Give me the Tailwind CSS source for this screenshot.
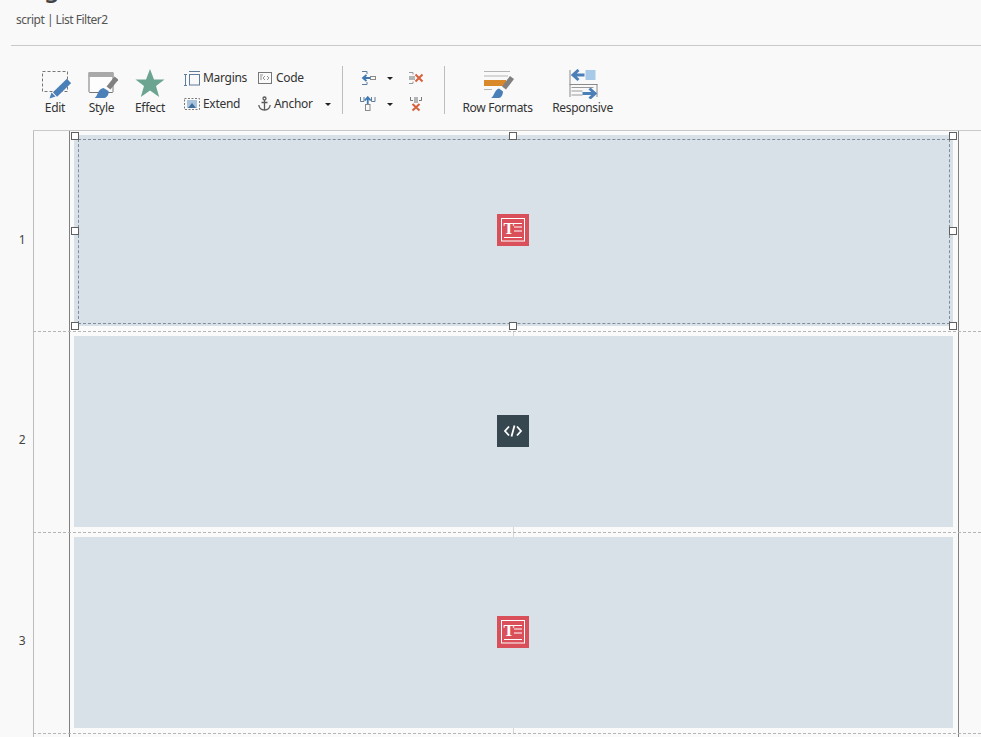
<!DOCTYPE html>
<html lang="en">
<head>
    <meta charset="UTF-8">
    <title>List Filter2</title>
    <script src="https://cdn.jsdelivr.net/npm/@tailwindcss/browser@4"></script>
</head>
<body class="bg-[#f9f9f9] text-[#333] font-['Noto_Sans',sans-serif] text-[12px] tracking-[-0.3px] w-[981px] h-[737px] overflow-hidden">

    <!-- Header -->
    <div class="h-[46px] ml-[11px] border-b border-[#c9c9c9] overflow-hidden relative">
        <div class="absolute left-[5px] top-[-28px] text-[24px] leading-[32px] font-semibold text-[#444]">Page</div>
        <div class="pl-[5px] pt-[11px] leading-[18px] tracking-[-0.5px] text-[#555]">script | List Filter2</div>
    </div>

    <!-- Toolbar -->
    <div class="h-[84px] flex pl-[35px] pt-[19px]">
        <div class="w-[40px] mt-[4px] flex flex-col items-center">
            <svg class="w-[32px] h-[30px]" viewBox="39 69 32 30" fill="none">
                <rect x="42.500" y="71.500" width="25" height="20" stroke="#777" stroke-dasharray="3 2"/>
                <path d="M69 81 55 94.500" stroke="#4a7fb8" stroke-width="6"/>
                <path d="M51.500 92.500l4 4-6 2z" fill="#4a7fb8"/>
            </svg>
            <span class="mt-px leading-[16px]">Edit</span>
        </div>
        <div class="w-[41px] ml-[6px] mt-[4px] flex flex-col items-center">
            <svg class="w-[32px] h-[30px]" viewBox="85.500 69 32 30" fill="none">
                <rect x="88.500" y="72.500" width="24" height="20" rx="1" stroke="#777" fill="#fdfdfd"/>
                <rect x="88" y="72" width="25" height="5" fill="#a9a9a9"/>
                <path d="M116 78 108 88" stroke="#808080" stroke-width="5"/>
                <path d="M94 98c3-1 3-9 9-10l5 3c1 3-2 7-4 7z" fill="#4a7fb8"/>
            </svg>
            <span class="mt-px leading-[16px]">Style</span>
        </div>
        <div class="w-[44px] ml-[6px] mt-[4px] flex flex-col items-center">
            <svg class="w-[32px] h-[30px]" viewBox="134 69 32 30">
                <path d="M150 69l4 10.500h10.500l-8.500 6.500 3.200 11-9.200-6.500-9.200 6.500 3.200-11-8.500-6.500h10.500z" fill="#6ba592"/>
            </svg>
            <span class="mt-px leading-[16px]">Effect</span>
        </div>

        <div class="w-[74px] ml-[12px]">
            <div class="h-[26px] flex items-center">
                <svg class="w-[16px] h-[16px]" viewBox="184 70 16 16" fill="none" stroke="#5f7d9b">
                    <path d="M184 74.500h3M185.500 74.500v11M184 85.500h3M189 71.500h11"/>
                    <rect x="189.500" y="74.500" width="10" height="10.500"/>
                </svg>
                <span class="ml-[3px]">Margins</span>
            </div>
            <div class="h-[26px] flex items-center">
                <svg class="w-[16px] h-[16px]" viewBox="184 96 16 16" fill="none">
                    <rect x="184.500" y="98.500" width="15" height="11" stroke="#777" stroke-dasharray="2 1.500"/>
                    <rect x="187" y="100" width="10" height="8" fill="#a9c3dc"/>
                    <path d="M188 108l4-5 4 5z" fill="#3f6d9c"/>
                </svg>
                <span class="ml-[3px]">Extend</span>
            </div>
        </div>
        <div class="w-[84px]">
            <div class="h-[26px] flex items-center">
                <svg class="w-[14px] h-[16px]" viewBox="258 70 14 16" fill="none" stroke="#777">
                    <rect x="258.500" y="72.500" width="13" height="11"/>
                    <path d="M260 75h3M260 77h2M260 79h2M265 76l-2 2 2 2M267 76l2 2-2 2" stroke-width="0.800"/>
                </svg>
                <span class="ml-[4px]">Code</span>
            </div>
            <div class="h-[26px] flex items-center">
                <svg class="w-[13px] h-[16px]" viewBox="258 96 13 16" fill="none" stroke="#5a5a5a" stroke-width="1.300">
                    <circle cx="264.500" cy="98.500" r="1.500"/>
                    <path d="M264.500 100v10M261.500 102.500h6M258.800 105c.3 3 2.500 4.800 5.700 5.200 3.200-.4 5.400-2.200 5.700-5.200"/>
                </svg>
                <span class="ml-[3px] w-[51px]">Anchor</span>
                <span class="w-0 h-0 border-x-[3px] border-x-transparent border-t-[3px] border-t-[#222]"></span>
            </div>
        </div>

        <div class="w-px h-[48px] mt-[1px] bg-[#bdbdbd]"></div>

        <div class="ml-[17px] w-[16px]">
            <div class="h-[26px] flex items-center">
                <svg class="w-[16px] h-[16px]" viewBox="360 70 16 16" fill="none">
                    <path d="M362 71.500h5M367 71.500v2.500M362 84.500h5M367 84.500v-2.500" stroke="#5f7d9b"/>
                    <path d="M370 78h-6M366.500 75 363 78l3.500 3" stroke="#3f78b0" stroke-width="1.800"/>
                    <rect x="370.500" y="76.500" width="5" height="3" stroke="#8a8a8a"/>
                </svg>
            </div>
            <div class="h-[26px] flex items-center">
                <svg class="w-[16px] h-[16px]" viewBox="361 96 16 16" fill="none">
                    <path d="M361.500 97v4.500h3.500V97M372.500 97v4.500h3.500V97" stroke="#5f7d9b"/>
                    <path d="M368.750 104v-6.500M365.800 100.500l2.950-3.300 2.950 3.300" stroke="#3f78b0" stroke-width="1.800"/>
                    <rect x="366.500" y="104.500" width="4.500" height="6" stroke="#8a8a8a"/>
                </svg>
            </div>
        </div>
        <div class="ml-[11px] w-[6px]">
            <div class="h-[26px] flex items-center">
                <span class="w-0 h-0 border-x-[3px] border-x-transparent border-t-[3px] border-t-[#222]"></span>
            </div>
            <div class="h-[26px] flex items-center">
                <span class="w-0 h-0 border-x-[3px] border-x-transparent border-t-[3px] border-t-[#222]"></span>
            </div>
        </div>
        <div class="ml-[15px] w-[16px]">
            <div class="h-[26px] flex items-center">
                <svg class="w-[16px] h-[16px]" viewBox="408 70 16 16" fill="none">
                    <path d="M409 72.500h4v2M409 83.500h4v-2" stroke="#999"/>
                    <rect x="409" y="76" width="6" height="4" fill="#b5b5b5"/>
                    <path d="M415.500 74.500l7 7M422.500 74.500l-7 7" stroke="#d9603b" stroke-width="2"/>
                </svg>
            </div>
            <div class="h-[26px] flex items-center">
                <svg class="w-[16px] h-[16px]" viewBox="408 96 16 16" fill="none">
                    <path d="M410.500 97v3.500h2.500M421.500 97v3.500h-2.500" stroke="#777"/>
                    <rect x="414" y="97" width="4" height="6" fill="#b5b5b5"/>
                    <path d="M412.500 104l7 6.500M419.500 104l-7 6.500" stroke="#d9603b" stroke-width="2"/>
                </svg>
            </div>
        </div>

        <div class="ml-[20px] w-px h-[48px] mt-[1px] bg-[#bdbdbd]"></div>

        <div class="w-[73px] ml-[16px] mt-[4px] flex flex-col items-center">
            <svg class="w-[32px] h-[30px]" viewBox="482 69 32 30" fill="none">
                <path d="M484 71.500h26M484 76h24M484 89.500h8" stroke="#b5b5b5"/>
                <rect x="484" y="80" width="22" height="6" fill="#d9882a"/>
                <path d="M512 77.500l-8 10.500" stroke="#808080" stroke-width="5"/>
                <path d="M491 98c3-1 3-8 8-9.500l4 3c0 3-2 6.500-4 6.500z" fill="#4a7fb8"/>
            </svg>
            <span class="mt-px leading-[16px] whitespace-nowrap">Row Formats</span>
        </div>
        <div class="w-[63px] ml-[17px] mt-[4px] flex flex-col items-center">
            <svg class="w-[32px] h-[30px]" viewBox="566.500 69 32 30" fill="none">
                <path d="M569.500 70v27M596.500 84v13M569 84.500h28" stroke="#8a8a8a"/>
                <rect x="585" y="70" width="10" height="10" fill="#a9c9e8"/>
                <path d="M584 75h-11M578 70 572.500 75l5.500 5" stroke="#4a7fb8" stroke-width="3"/>
                <path d="M571 87.500h22M571 91h11M571 95h11" stroke="#9a9a9a"/>
                <path d="M582 93.500h12M589 88.500l5.500 5-5.500 5" stroke="#4a7fb8" stroke-width="3"/>
            </svg>
            <span class="mt-px leading-[16px]">Responsive</span>
        </div>
    </div>

    <!-- Rows -->
    <div class="flex">
        <div class="w-[33px] shrink-0 text-[#444] pt-px">
            <div class="h-[201px] flex items-center justify-center pt-[16px] pl-[11px]">1</div>
            <div class="h-[201px] flex items-center justify-center pt-[15px] pl-[11px]">2</div>
            <div class="h-[201px] flex items-center justify-center pt-[15px] pl-[11px]">3</div>
        </div>
        <div class="flex-1 border-t border-[#c9c9c9]">

            <!-- Row 1 -->
            <div class="h-[201px] flex border-b border-dashed border-[#b5b5b5]">
                <div class="w-[36px] border-l border-[#bdbdbd]"></div>
                <div class="w-[890px] bg-[#fbfafa] border-x border-[#808080] pt-[4px] pl-[4px] pr-[5px] relative">
                    <div class="h-[191px] pr-px pb-px bg-[#d9e1e8] flex items-center justify-center">
                        <svg class="w-[32px] h-[32px]" viewBox="0 0 32 32" fill="none">
                            <rect width="32" height="32" fill="#d9505a"/>
                            <rect x="4.500" y="4.500" width="23" height="22.500" stroke="#fff"/>
                            <text x="6.500" y="20" font-family="Liberation Serif" font-weight="700" font-size="16" fill="#fff">T</text>
                            <path d="M17 9.500h8M17 13h8M17 17h8M7 23.500h18" stroke="#fff"/>
                        </svg>
                    </div>
                    <!-- selection -->
                    <div class="absolute left-[8px] top-[8px] w-[872px] h-[185px] border border-dashed border-[#7f8c99]"></div>
                    <div class="absolute left-[1px] top-px w-[8px] h-[8px] bg-white border border-[#606060]"></div>
                    <div class="absolute left-[439px] top-px w-[8px] h-[8px] bg-white border border-[#606060]"></div>
                    <div class="absolute left-[879px] top-px w-[8px] h-[8px] bg-white border border-[#606060]"></div>
                    <div class="absolute left-[1px] top-[96px] w-[8px] h-[8px] bg-white border border-[#606060]"></div>
                    <div class="absolute left-[879px] top-[96px] w-[8px] h-[8px] bg-white border border-[#606060]"></div>
                    <div class="absolute left-[1px] top-[191px] w-[8px] h-[8px] bg-white border border-[#606060]"></div>
                    <div class="absolute left-[439px] top-[191px] w-[8px] h-[8px] bg-white border border-[#606060]"></div>
                    <div class="absolute left-[879px] top-[191px] w-[8px] h-[8px] bg-white border border-[#606060]"></div>
                </div>
                <div class="flex-1"></div>
            </div>

            <!-- Row 2 -->
            <div class="h-[201px] flex border-b border-dashed border-[#b5b5b5]">
                <div class="w-[36px] border-l border-[#bdbdbd]"></div>
                <div class="w-[890px] bg-[#fbfafa] border-x border-[#808080] pt-[4px] pl-[4px] pr-[5px] relative">
                    <div class="absolute left-[443px] top-0 w-px h-[4px] bg-[#d5d5d5]"></div>
                    <div class="absolute left-[443px] bottom-0 w-px h-[5px] bg-[#d5d5d5]"></div>
                    <div class="h-[191px] pr-px pb-px bg-[#d9e1e8] flex items-center justify-center">
                        <svg class="w-[32px] h-[32px]" viewBox="0 0 32 32" fill="none">
                            <rect width="32" height="32" fill="#37474f"/>
                            <path d="M12 11.500 8 16l4 4.500M20 11.500 24 16l-4 4.500M17.500 10.500l-3 11" stroke="#fff" stroke-width="1.800"/>
                        </svg>
                    </div>
                </div>
                <div class="flex-1"></div>
            </div>

            <!-- Row 3 -->
            <div class="h-[201px] flex border-b border-dashed border-[#b5b5b5]">
                <div class="w-[36px] border-l border-[#bdbdbd]"></div>
                <div class="w-[890px] bg-[#fbfafa] border-x border-[#808080] pt-[4px] pl-[4px] pr-[5px] relative">
                    <div class="absolute left-[443px] top-0 w-px h-[4px] bg-[#d5d5d5]"></div>
                    <div class="absolute left-[443px] bottom-0 w-px h-[5px] bg-[#d5d5d5]"></div>
                    <div class="h-[191px] pr-px pb-px bg-[#d9e1e8] flex items-center justify-center">
                        <svg class="w-[32px] h-[32px]" viewBox="0 0 32 32" fill="none">
                            <rect width="32" height="32" fill="#d9505a"/>
                            <rect x="4.500" y="4.500" width="23" height="22.500" stroke="#fff"/>
                            <text x="6.500" y="20" font-family="Liberation Serif" font-weight="700" font-size="16" fill="#fff">T</text>
                            <path d="M17 9.500h8M17 13h8M17 17h8M7 23.500h18" stroke="#fff"/>
                        </svg>
                    </div>
                </div>
                <div class="flex-1"></div>
            </div>

            <!-- Next row, cut off by the window -->
            <div class="h-[10px] flex">
                <div class="w-[36px] border-l border-[#bdbdbd]"></div>
                <div class="w-[890px] bg-[#fbfafa] border-x border-[#808080]"></div>
            </div>
        </div>
    </div>

</body>
</html>
